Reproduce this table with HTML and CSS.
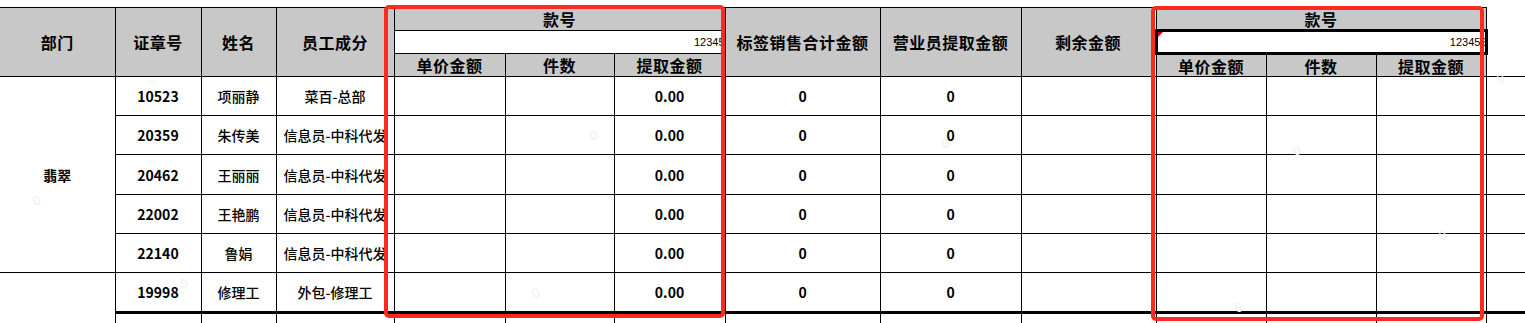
FILE: index.html
```html
<!DOCTYPE html>
<html lang="zh-CN">
<head>
<meta charset="utf-8">
<title>提取金额表</title>
<link rel="stylesheet" href="styles.css">
</head>
<body>
<div class="sheet">
  <table class="grid">
    <colgroup>
      <col class="c-dept"><col class="c-id"><col class="c-name"><col class="c-role">
      <col class="c-a1"><col class="c-a2"><col class="c-a3">
      <col class="c-sum"><col class="c-emp"><col class="c-rest">
      <col class="c-b1"><col class="c-b2"><col class="c-b3">
      <col class="c-tail">
    </colgroup>
    <thead>
      <tr class="h-row">
        <th rowspan="3" class="hd dept-edge">部门</th>
        <th rowspan="3" class="hd">证章号</th>
        <th rowspan="3" class="hd">姓名</th>
        <th rowspan="3" class="hd">员工成分</th>
        <th colspan="3" class="hd">款号</th>
        <th rowspan="3" class="hd">标签销售合计金额</th>
        <th rowspan="3" class="hd">营业员提取金额</th>
        <th rowspan="3" class="hd">剩余金额</th>
        <th colspan="3" class="hd">款号</th>
        <th rowspan="3" class="tail-head"></th>
      </tr>
      <tr class="h-row">
        <td colspan="3" class="code"><span class="code-text">12345</span></td>
        <td colspan="3" class="code selected"><span class="comment-mark"></span><span class="code-text clip">123456</span></td>
      </tr>
      <tr class="h-row">
        <th class="hd">单价金额</th><th class="hd">件数</th><th class="hd">提取金额</th>
        <th class="hd">单价金额</th><th class="hd">件数</th><th class="hd">提取金额</th>
      </tr>
    </thead>
    <tbody>
      <tr class="r39">
        <td rowspan="5" class="dept dept-edge">翡翠</td>
        <td class="num">10523</td><td class="txt">项丽静</td><td class="txt">菜百-总部</td>
        <td></td><td></td><td class="num">0.00</td>
        <td class="num">0</td><td class="num">0</td><td></td>
        <td></td><td></td><td></td><td class="tail"></td>
      </tr>
      <tr class="r39">
        <td class="num">20359</td><td class="txt">朱传美</td><td class="txt nowrap">信息员-中科代发</td>
        <td></td><td></td><td class="num">0.00</td>
        <td class="num">0</td><td class="num">0</td><td></td>
        <td></td><td></td><td></td><td class="tail"></td>
      </tr>
      <tr class="r40">
        <td class="num">20462</td><td class="txt">王丽丽</td><td class="txt nowrap">信息员-中科代发</td>
        <td></td><td></td><td class="num">0.00</td>
        <td class="num">0</td><td class="num">0</td><td></td>
        <td></td><td></td><td></td><td class="tail"></td>
      </tr>
      <tr class="r39">
        <td class="num">22002</td><td class="txt">王艳鹏</td><td class="txt nowrap">信息员-中科代发</td>
        <td></td><td></td><td class="num">0.00</td>
        <td class="num">0</td><td class="num">0</td><td></td>
        <td></td><td></td><td></td><td class="tail"></td>
      </tr>
      <tr class="r39">
        <td class="num">22140</td><td class="txt">鲁娟</td><td class="txt nowrap">信息员-中科代发</td>
        <td></td><td></td><td class="num">0.00</td>
        <td class="num">0</td><td class="num">0</td><td></td>
        <td></td><td></td><td></td><td class="tail"></td>
      </tr>
      <tr class="r40">
        <td rowspan="2" class="dept dept-edge"></td>
        <td class="num">19998</td><td class="txt">修理工</td><td class="txt">外包-修理工</td>
        <td></td><td></td><td class="num">0.00</td>
        <td class="num">0</td><td class="num">0</td><td></td>
        <td></td><td></td><td></td><td class="tail"></td>
      </tr>
      <tr class="r39 thick">
        <td></td><td></td><td></td>
        <td></td><td></td><td></td>
        <td></td><td></td><td></td>
        <td></td><td></td><td></td><td class="tail"></td>
      </tr>
    </tbody>
  </table>

  <span class="wm wm1">0</span>
  <span class="wm wm2">0</span>
  <span class="wm wm3">0</span>
  <span class="wm wm4">0</span>
  <span class="wm wm5">0</span>
  <span class="wm wm6">0</span>
  <span class="wm wm7">0</span>
  <span class="wm wm8">0</span>
  <span class="wm wm9">0</span>

  <div class="mark mark-a"></div>
  <div class="mark mark-b"></div>
</div>
</body>
</html>
```

FILE: styles.css
```css
html, body {
  margin: 0;
  padding: 0;
  background: #ffffff;
}

.sheet {
  position: relative;
  width: 1525px;
  height: 323px;
  overflow: hidden;
  padding-top: 7px;
  box-sizing: border-box;
  font-family: "Noto Sans CJK SC", "Noto Sans", sans-serif;
  color: #000;
}

.grid {
  border-collapse: collapse;
  table-layout: fixed;
  width: 1560px;
}

.c-dept { width: 115px; }
.c-id   { width: 86px; }
.c-name { width: 75px; }
.c-role { width: 118px; }
.c-a1   { width: 111px; }
.c-a2   { width: 109px; }
.c-a3   { width: 111px; }
.c-sum  { width: 155px; }
.c-emp  { width: 141px; }
.c-rest { width: 135px; }
.c-b1   { width: 110px; }
.c-b2   { width: 110px; }
.c-b3   { width: 110px; }
.c-tail { width: 74px; }

.grid th,
.grid td {
  border: 1px solid #000;
  padding: 0;
  text-align: center;
  vertical-align: middle;
  overflow: hidden;
  white-space: nowrap;
}

.h-row { height: 23px; }
.r39 { height: 39px; }
.r40 { height: 40px; }

.hd {
  background: #c8c8c8;
  font-size: 16px;
  font-weight: 700;
  line-height: 20px;
  letter-spacing: 0.5px;
}

.grid .dept-edge { border-left: none; }

.grid .tail-head {
  border-top: none;
  border-right: none;
  background: #fff;
}

.grid .tail { border-right: none; }

.code {
  background: #fff;
  font-family: "Liberation Sans", Arial, sans-serif;
  font-size: 11px;
  line-height: 20px;
}

.grid .code { text-align: right; }

.code-text { display: inline-block; }
.code-text.clip { margin-right: -2px; }

.grid .selected {
  border: 3px solid #000;
  position: relative;
}

.comment-mark {
  position: absolute;
  left: 0;
  top: 0;
  width: 0;
  height: 0;
  border-top: 5px solid #d40000;
  border-right: 5px solid transparent;
}

.num {
  font-size: 14px;
  font-weight: 700;
}

.txt {
  font-size: 14px;
  font-weight: 500;
}

.dept {
  font-size: 14px;
  font-weight: 700;
}

.grid .thick td { border-top: 3px solid #000; }

.wm {
  position: absolute;
  font-family: "Liberation Sans", Arial, sans-serif;
  font-size: 13px;
  color: #efefef;
  transform: rotate(-20deg);
  pointer-events: none;
}
.wm1 { left: 33px;  top: 193px; }
.wm2 { left: 590px; top: 128px; }
.wm3 { left: 1293px; top: 143px; }
.wm4 { left: 532px; top: 285px; }
.wm5 { left: 180px; top: 276px; }
.wm6 { left: 942px; top: 136px; }
.wm7 { left: 1439px; top: 228px; }
.wm8 { left: 1235px; top: 300px; }
.wm9 { left: 1497px; top: 71px; }

.mark {
  position: absolute;
  border: 4px solid #ff2a1e;
  border-radius: 5px;
  box-sizing: border-box;
}
.mark-a { left: 384px; top: 5px; width: 341px; height: 313px; }
.mark-b { left: 1151px; top: 6px; width: 333px; height: 315px; }
```
